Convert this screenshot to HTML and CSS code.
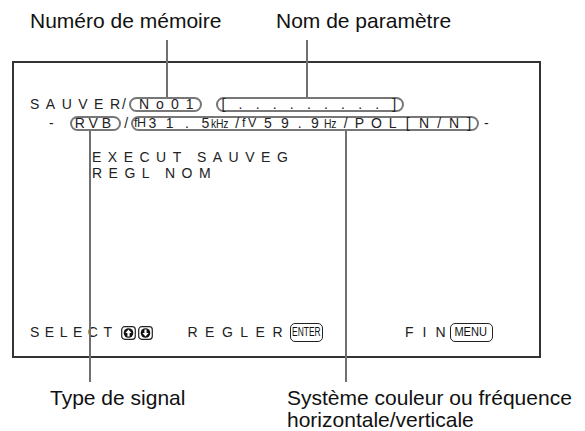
FILE: index.html
```html
<!DOCTYPE html>
<html lang="fr">
<head>
  <meta charset="UTF-8" />
  <meta name="viewport" content="width=device-width, initial-scale=1" />
  <title>Sauver - mémoire</title>
  <link rel="stylesheet" href="styles.css">
</head>
<body>
  <div class="figure">
    <div class="top-labels">
      <span class="callout">Numéro de mémoire</span>
      <span class="callout">Nom de paramètre</span>
    </div>

    <div class="screen">
      <div class="row">
        <span class="wide">SAUVE</span><span>R</span><span class="slash">/</span>
        <span class="pill pill-no"><span class="ls7">No01</span></span>
        <span class="pill pill-name"><span class="dots">[.........</span>]</span>
      </div>
      <div class="row">
        <span class="dash">-</span>
        <span class="pill pill-rvb"><span class="ls4">RVB</span></span>
        <span class="slash2">/</span>
        <span class="pill pill-freq">
          <span class="small fh">fH</span><span class="num">31<span class="dot">.</span></span><span>5</span><span class="unit khz">kHz</span><span class="sl">/</span><span class="small fv">fV</span><span class="num2">59.</span><span>9</span><span class="unit hz">Hz</span><span class="pol">/POL</span><span class="br">[</span><span class="nn">N/N</span>]
        </span>
        <span class="dash-end">-</span>
      </div>

      <div class="options">
        <div class="wide">EXECUT SAUVEG</div>
        <div class="wide">REGL NOM</div>
      </div>

      <div class="row keys">
        <span class="wide sel">SELECT</span>
        <span class="arrows">
          <svg class="key-icon" width="15" height="14" viewBox="0 0 15 14">
            <rect x="0.7" y="0.7" width="13.6" height="12.6" rx="3" fill="#fff" stroke="#222" stroke-width="1.2"/>
            <circle cx="7.5" cy="7" r="4.8" fill="#111"/>
            <path d="M7.5 3.4 L10.6 6.9 L8.6 6.9 L8.6 10.4 L6.4 10.4 L6.4 6.9 L4.4 6.9 Z" fill="#fff"/>
          </svg>
          <svg class="key-icon" width="15" height="14" viewBox="0 0 15 14">
            <rect x="0.7" y="0.7" width="13.6" height="12.6" rx="3" fill="#fff" stroke="#222" stroke-width="1.2"/>
            <circle cx="7.5" cy="7" r="4.8" fill="#111"/>
            <path d="M7.5 10.6 L10.6 7.1 L8.6 7.1 L8.6 3.6 L6.4 3.6 L6.4 7.1 L4.4 7.1 Z" fill="#fff"/>
          </svg>
        </span>
        <span class="wide regler">REGLER</span>
        <span class="key key-enter"><span class="key-text">ENTER</span></span>
        <span class="wide fin">FI</span><span>N</span>
        <span class="key key-menu"><span class="key-text">MENU</span></span>
      </div>
    </div>

    <div class="bottom-labels">
      <span class="callout">Type de signal</span>
      <span class="callout">Système couleur ou fréquence<br>horizontale/verticale</span>
    </div>

    <!-- leader lines from the labels to the screen items -->
    <span class="leader leader-no"></span>
    <span class="leader leader-name"></span>
    <span class="leader leader-rvb"></span>
    <span class="leader leader-freq"></span>
  </div>
</body>
</html>
```

FILE: styles.css
```css
body {
  margin: 0;
  background: #fff;
  font-family: "Liberation Sans", Arial, sans-serif;
  color: #111;
}
.figure {
  position: relative;
  width: 585px;
  height: 431px;
  overflow: hidden;
}
.callout {
  font-size: 21px;
  line-height: 22px;
  color: #111;
}
.top-labels {
  display: grid;
  grid-template-columns: 246px auto;
  height: 61px;
  padding: 10px 0 0 30px;
  box-sizing: border-box;
}
.bottom-labels {
  display: grid;
  grid-template-columns: 237px auto;
  margin-top: 29px;
  padding-left: 50px;
}

/* monitor screen */
.screen {
  margin-left: 12px;
  width: 529px;
  height: 297px;
  box-sizing: border-box;
  border: 2px solid #333;
  padding: 32px 0 14px 16px;
  display: flex;
  flex-direction: column;
  font-size: 14px;
  color: #222;
}
.row {
  display: flex;
  align-items: center;
  height: 19px;
  line-height: 19px;
  white-space: nowrap;
}
.wide {
  letter-spacing: 6.5px;
}
.pill {
  display: inline-flex;
  align-items: center;
  height: 15px;
  line-height: 11px;
  box-sizing: border-box;
  border: 2px solid #777;
  border-radius: 8px;
  white-space: nowrap;
}
.slash {
  margin-left: 2px;
}
.pill-no {
  margin-left: 3px;
  padding-left: 8px;
}
.ls7 {
  letter-spacing: 7px;
}
.pill-name {
  margin-left: 14px;
  padding: 0 6px 0 3px;
}
.dots {
  letter-spacing: 13.2px;
}
.dash {
  margin-left: 19px;
}
.pill-rvb {
  margin-left: 16px;
  padding: 0 4px 0 3px;
}
.ls4 {
  letter-spacing: 4px;
}
.slash2 {
  margin-left: 3px;
}
.pill-freq {
  margin-left: 3px;
  padding: 0 6px 0 1px;
}
.small {
  font-size: 12.5px;
  letter-spacing: -0.6px;
}
.unit {
  display: inline-block;
  font-size: 13px;
  letter-spacing: -0.3px;
  transform: scaleX(0.8);
  transform-origin: left center;
}
.fh {
  margin-right: 3px;
}
.num {
  letter-spacing: 9.5px;
}
.dot {
  margin: 0 3px 0 2px;
}
.khz {
  width: 19px;
  margin-left: 2px;
}
.sl {
  margin: 0 3px 0 5px;
}
.fv {
  letter-spacing: 2.5px;
  margin-right: 5px;
}
.num2 {
  letter-spacing: 9.2px;
}
.hz {
  width: 14px;
  margin-left: 5px;
}
.pol {
  margin-left: 6px;
  letter-spacing: 7px;
}
.br {
  margin-left: 2px;
  letter-spacing: 9.5px;
}
.nn {
  letter-spacing: 8px;
}
.dash-end {
  margin-left: 5px;
}
.options {
  margin: 16px 0 0 62px;
  line-height: 16px;
  word-spacing: -1px;
}

/* bottom key row */
.keys {
  margin-top: auto;
}
.sel {
  letter-spacing: 5.5px;
}
.arrows {
  display: flex;
  gap: 2px;
  margin-left: 4px;
}
.key-icon {
  display: block;
}
.regler {
  margin-left: 34px;
  letter-spacing: 7.5px;
}
.key {
  display: inline-flex;
  align-items: center;
  justify-content: center;
  height: 19px;
  box-sizing: border-box;
  border: 1.3px solid #222;
  border-radius: 5px;
  font-size: 12px;
  color: #111;
}
.key-enter {
  width: 33px;
}
.key-enter .key-text {
  display: inline-block;
  transform: scaleX(0.7);
}
.key-menu {
  width: 43px;
  margin-left: 4px;
}
.key-menu .key-text {
  display: inline-block;
  transform: scaleX(0.92);
}
.fin {
  margin-left: 82px;
  letter-spacing: 9px;
}

/* leader lines */
.leader {
  position: absolute;
  width: 2px;
  background: #707070;
}
.leader-no {
  left: 166px;
  top: 40px;
  height: 57px;
}
.leader-name {
  left: 306px;
  top: 40px;
  height: 57px;
}
.leader-rvb {
  left: 89px;
  top: 131px;
  height: 251px;
}
.leader-freq {
  left: 345px;
  top: 131px;
  height: 251px;
}
```
